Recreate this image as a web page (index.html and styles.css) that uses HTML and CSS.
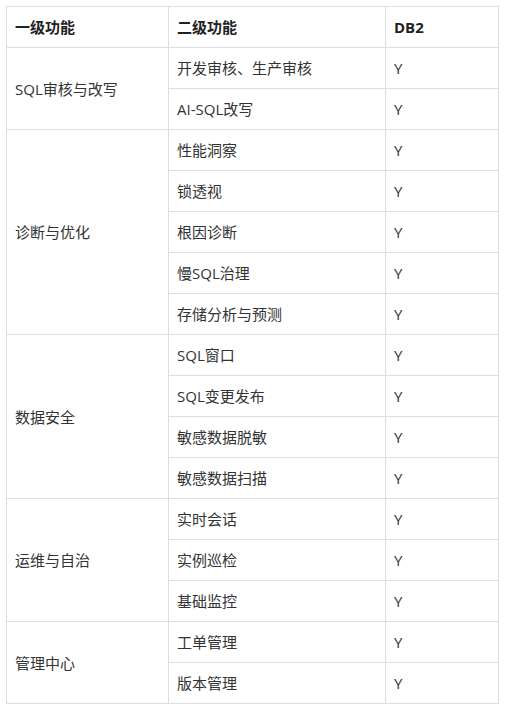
FILE: index.html
```html
<!DOCTYPE html>
<html lang="zh">
<head>
<meta charset="utf-8">
<link rel="stylesheet" href="styles.css">
</head>
<body>
<table class="feat">
  <colgroup>
    <col class="c1"><col class="c2"><col class="c3">
  </colgroup>
  <thead>
    <tr><th>一级功能</th><th>二级功能</th><th>DB2</th></tr>
  </thead>
  <tbody>
    <tr><td rowspan="2">SQL审核与改写</td><td>开发审核、生产审核</td><td>Y</td></tr>
    <tr><td>AI-SQL改写</td><td>Y</td></tr>
    <tr><td rowspan="5">诊断与优化</td><td>性能洞察</td><td>Y</td></tr>
    <tr><td>锁透视</td><td>Y</td></tr>
    <tr><td>根因诊断</td><td>Y</td></tr>
    <tr><td>慢SQL治理</td><td>Y</td></tr>
    <tr><td>存储分析与预测</td><td>Y</td></tr>
    <tr><td rowspan="4">数据安全</td><td>SQL窗口</td><td>Y</td></tr>
    <tr><td>SQL变更发布</td><td>Y</td></tr>
    <tr><td>敏感数据脱敏</td><td>Y</td></tr>
    <tr><td>敏感数据扫描</td><td>Y</td></tr>
    <tr><td rowspan="3">运维与自治</td><td>实时会话</td><td>Y</td></tr>
    <tr><td>实例巡检</td><td>Y</td></tr>
    <tr><td>基础监控</td><td>Y</td></tr>
    <tr><td rowspan="2">管理中心</td><td>工单管理</td><td>Y</td></tr>
    <tr><td>版本管理</td><td>Y</td></tr>
  </tbody>
</table>
</body>
</html>
```
FILE: styles.css
```css
html, body {
  margin: 0;
  background: #fff;
}
body {
  padding: 6px;
  font-family: "Open Sans", "Noto Sans CJK SC", sans-serif;
  font-size: 15px;
  color: #333;
}
.feat {
  border-collapse: collapse;
  table-layout: fixed;
  width: 492px;
}
.c1 { width: 162px; }
.c2 { width: 217px; }
.c3 { width: 113px; }
.feat th, .feat td {
  border: 1px solid #dedede;
  height: 41px;
  padding: 0 8px;
  box-sizing: border-box;
  text-align: left;
  vertical-align: middle;
  line-height: 22px;
}
.feat th {
  font-weight: bold;
  color: #222;
}
```
